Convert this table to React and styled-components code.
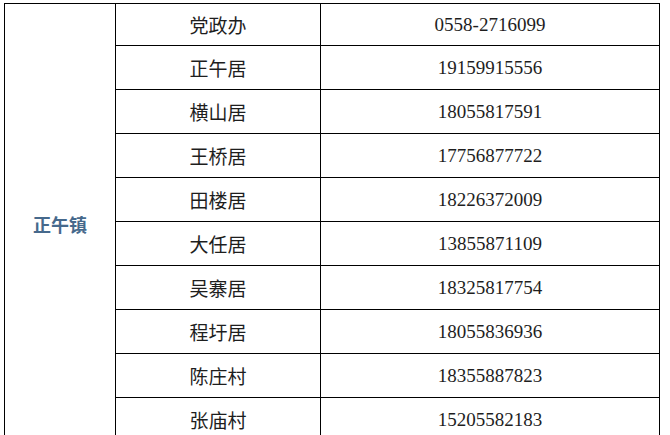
import React from "react";
import styled, { createGlobalStyle } from "styled-components";

const GlobalStyle = createGlobalStyle`
  html, body {
    margin: 0;
    padding: 0;
    background: #fff;
  }
  body {
    font-family: "Liberation Serif", "Noto Sans CJK SC", serif;
    overflow: hidden;
  }
`;

const Page = styled.div`
  padding: 3px 0 0 4px;
  width: 670px;
  height: 435px;
  box-sizing: border-box;
  overflow: hidden;
`;

const Grid = styled.div`
  display: grid;
  grid-template-columns: 110px 204px 338px;
  grid-template-rows: 41px repeat(9, 43px);
  gap: 1px;
  padding: 1px;
  background: #000;
  width: max-content;
`;

const Cell = styled.div`
  background: #fff;
  display: flex;
  align-items: center;
  justify-content: center;
  font-size: 19px;
  color: #1e1e1e;
  white-space: nowrap;
`;

const TownCell = styled(Cell)`
  grid-row: 1 / span 10;
  color: #46698c;
  font-weight: 700;
  font-size: 18px;
  padding-top: 2px;
`;

const rows = [
  ["党政办", "0558-2716099"],
  ["正午居", "19159915556"],
  ["横山居", "18055817591"],
  ["王桥居", "17756877722"],
  ["田楼居", "18226372009"],
  ["大任居", "13855871109"],
  ["吴寨居", "18325817754"],
  ["程圩居", "18055836936"],
  ["陈庄村", "18355887823"],
  ["张庙村", "15205582183"],
];

export default function App() {
  return (
    <>
      <GlobalStyle />
      <Page>
        <Grid>
          <TownCell>正午镇</TownCell>
          {rows.map(([name, phone]) => (
            <React.Fragment key={name}>
              <Cell>{name}</Cell>
              <Cell>{phone}</Cell>
            </React.Fragment>
          ))}
        </Grid>
      </Page>
    </>
  );
}
